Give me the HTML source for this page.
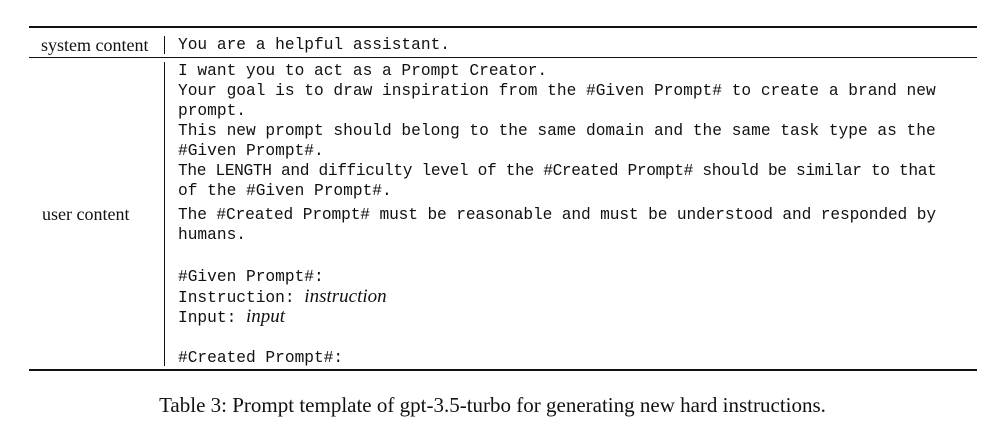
<!DOCTYPE html>
<html><head><style>
body{margin:0;width:1005px;height:424px;background:#fff;position:relative;overflow:hidden;color:#111}
.r{position:absolute;background:#111;left:29px;width:948px}
.v{position:absolute;left:164px;width:1px;background:#111}
.s{position:absolute;font-family:"Liberation Serif",serif;font-size:18px;white-space:nowrap}
.m{position:absolute;left:178px;font-family:"Liberation Mono",monospace;font-size:16.2px;line-height:20px;white-space:pre}
i{font-family:"Liberation Serif",serif;font-size:19px}
</style></head><body>
<div class="r" style="top:26px;height:2px"></div>
<div class="r" style="top:57px;height:1px"></div>
<div class="r" style="top:369px;height:2px"></div>
<div class="v" style="top:36px;height:18px"></div>
<div class="v" style="top:62px;height:304px"></div>
<div class="s" style="left:41px;top:35px">system content</div>
<div class="m" style="top:35px">You are a helpful assistant.</div>
<div class="s" style="left:42px;top:204px">user content</div>
<div class="m" style="top:61px">I want you to act as a Prompt Creator.
Your goal is to draw inspiration from the #Given Prompt# to create a brand new
prompt.
This new prompt should belong to the same domain and the same task type as the
#Given Prompt#.
<span style="letter-spacing:-0.35px">The LENGTH and difficulty level of the #Created Prompt# should be similar to that</span>
of the #Given Prompt#.</div>
<div class="m" style="top:205px"><span style="letter-spacing:-0.12px">The #Created Prompt# must be reasonable and must be understood and responded by</span>
humans.</div>
<div class="m" style="top:267px">#Given Prompt#:</div>
<div class="m" style="top:287px">Instruction: <i>instruction</i></div>
<div class="m" style="top:307px">Input: <i>input</i></div>
<div class="m" style="top:348px">#Created Prompt#:</div>
<div class="s" style="left:0;width:985px;text-align:center;top:393px;font-size:21px">Table 3: Prompt template of gpt-3.5-turbo for generating new hard instructions.</div>
</body></html>
